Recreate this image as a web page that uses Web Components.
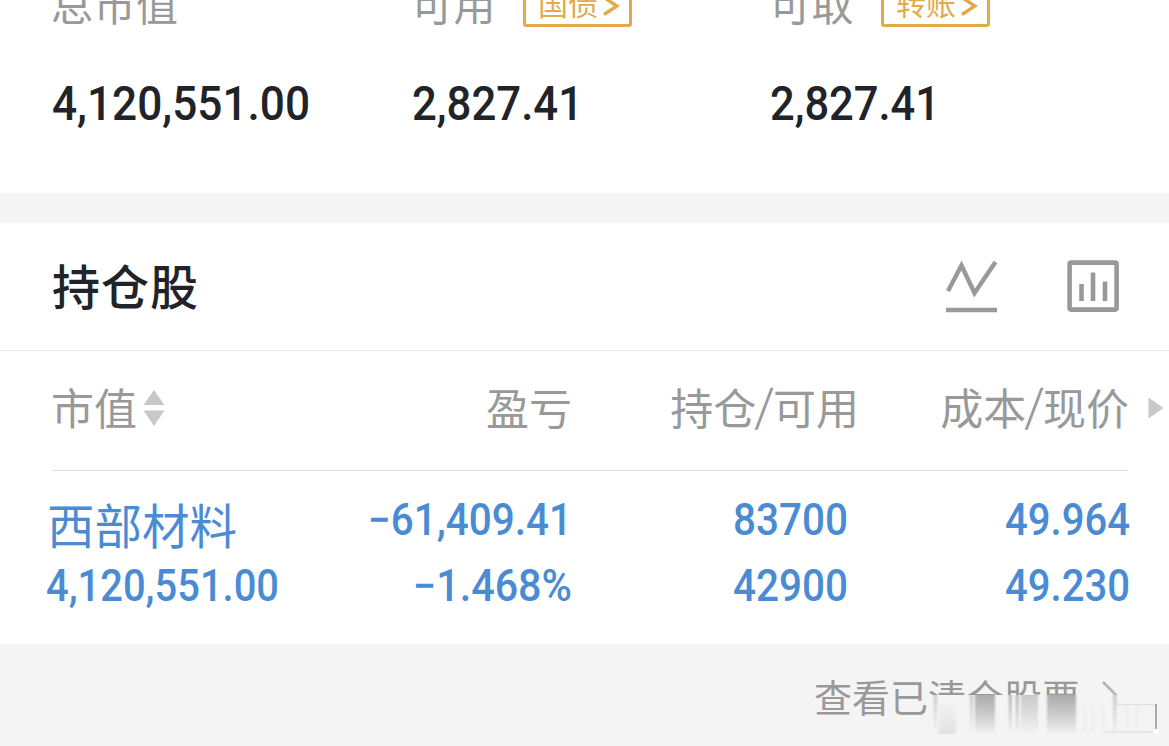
<!DOCTYPE html>
<html lang="zh-CN">
<head>
<meta charset="utf-8">
<title>持仓</title>
<style>
  body {
    margin: 0;
    width: 1169px;
    height: 746px;
    overflow: hidden;
    background: #f4f4f4;
    font-family: "Noto Sans CJK SC", sans-serif;
    color: #212329;
  }
</style>
</head>
<body>
<holdings-page></holdings-page>

<script>
const define = (name, html, setup, observed = []) => {
  const template = document.createElement('template');
  template.innerHTML = html;
  customElements.define(name, class extends HTMLElement {
    static get observedAttributes() {
      return observed;
    }
    constructor() {
      super();
      this.attachShadow({ mode: 'open' }).appendChild(template.content.cloneNode(true));
    }
    connectedCallback() {
      if (setup) setup(this, this.shadowRoot);
    }
    attributeChangedCallback() {
      if (this.isConnected) setup(this, this.shadowRoot);
    }
  });
};

// figure drawn at a fixed width, in narrow digits
define('num-text', `
  <style>
    :host { display: block; line-height: 0; }
    svg { display: block; overflow: visible; }
    text { font-family: Roboto, sans-serif; font-weight: 500; fill: currentColor; }
  </style>
  <svg><text x="0" lengthAdjust="spacingAndGlyphs"></text></svg>
`, (el, root) => {
  const width = el.getAttribute('width') || 0;
  const size = Number(el.getAttribute('size'));
  const svg = root.querySelector('svg');
  const text = root.querySelector('text');
  svg.setAttribute('width', width);
  svg.setAttribute('height', Math.round(size * 0.711));
  text.setAttribute('y', Math.round(size * 0.711));
  text.setAttribute('font-size', size);
  text.setAttribute('textLength', width);
  text.textContent = el.getAttribute('value') || '';
}, ['width', 'value']);

define('link-tag', `
  <style>
    :host {
      display: flex;
      align-items: flex-end;
      gap: 4px;
      box-sizing: border-box;
      width: 109px;
      height: 44px;
      padding: 0 9px 0 12px;
      border: 3px solid #e3a94b;
      border-radius: 3px;
      color: #e3a94b;
      font-size: 30px;
      line-height: 44px;
      white-space: nowrap;
    }
    svg { flex: none; margin-bottom: 8px; }
  </style>
  <slot></slot>
  <svg width="18" height="20" viewBox="0 0 18 20" fill="none" stroke="#e3a94b" stroke-width="3.4"><path d="M2 1.500L15 10L2 18.500"/></svg>
`);

define('balance-item', `
  <style>
    :host { display: block; }
    .label {
      display: flex;
      align-items: flex-end;
      gap: 27px;
      height: 44px;
      margin-top: -17px;
      color: #999;
      font-size: 42px;
      letter-spacing: .5px;
      line-height: 46px;
    }
    .label span { height: 47px; white-space: nowrap; }
    ::slotted(link-tag) { letter-spacing: 0; }
    num-text { margin: 59px 0 0 1px; }
  </style>
  <div class="label"><span></span><slot></slot></div>
  <num-text size="48.5"></num-text>
`, (el, root) => {
  root.querySelector('span').textContent = el.getAttribute('label');
  const num = root.querySelector('num-text');
  num.setAttribute('width', el.getAttribute('width'));
  num.setAttribute('value', el.getAttribute('value'));
});

define('balance-bar', `
  <style>
    :host {
      display: grid;
      grid-template-columns: 360px 358px 1fr;
      box-sizing: border-box;
      height: 193px;
      padding-left: 51px;
      overflow: hidden;
      background: #fff;
    }
  </style>
  <slot></slot>
`);

define('holdings-title', `
  <style>
    :host {
      display: flex;
      align-items: center;
      box-sizing: border-box;
      height: 128px;
      margin-top: 30px;
      padding: 0 50px 2px 52px;
      border-bottom: 1px solid #e8e8e8;
      background: #fff;
    }
    h2 {
      flex: 1;
      margin: 0;
      padding-bottom: 3px;
      font-size: 48px;
      font-weight: 500;
      letter-spacing: 1px;
      line-height: 60px;
    }
    .icons { display: flex; gap: 69px; }
  </style>
  <h2><slot></slot></h2>
  <div class="icons">
    <svg width="53" height="54" viewBox="0 0 53 54" fill="none" stroke="#999" stroke-width="4.4">
      <path d="M3 32L16.5 6.5L29.5 34L50.5 3M1 51H52"/>
    </svg>
    <svg width="52" height="54" viewBox="0 0 52 54" fill="none" stroke="#999">
      <rect x="2.6" y="3.6" width="47" height="47" rx="1.5" stroke-width="4.6"/>
      <path d="M14.5 25V42M26 13.500V42M38 22.500V42" stroke-width="4.6"/>
    </svg>
  </div>
`);

define('holdings-head', `
  <style>
    :host {
      display: grid;
      grid-template-columns: 219px 302px 287px 270px 1fr;
      align-items: center;
      box-sizing: border-box;
      height: 119px;
      padding: 0 0 10px 51px;
      background: #fff;
      color: #999;
      font-size: 43px;
      line-height: 60px;
      white-space: nowrap;
    }
    div { text-align: right; }
    .sort { display: flex; align-items: center; gap: 6px; }
    .sort svg { margin-top: 4px; }
    .more { padding: 5px 0 0 19px; box-sizing: border-box; display: flex; }
    /* the slash stands higher and wider than the CJK font's own */
    i { display: inline-block; font-style: normal; transform: translateY(-3px) skewX(-4deg); }
  </style>
  <div class="sort">市值
    <svg width="22" height="38" viewBox="0 0 22 38" fill="#c8c8c8"><path d="M11 1L21.500 16H.5ZM.5 21.500H21.500L11 37Z"/></svg>
  </div>
  <div>盈亏</div>
  <div>持仓<i>/</i>可用</div>
  <div>成本<i>/</i>现价</div>
  <div class="more"><svg width="16" height="22" viewBox="0 0 16 22" fill="#c8c8c8"><path d="M.5 .5L15.500 11L.5 21.500Z"/></svg></div>
`);

define('holding-row', `
  <style>
    :host {
      display: grid;
      grid-template-columns: 232px 294px 276px 282px;
      grid-template-rows: 1px 1fr;
      box-sizing: border-box;
      height: 174px;
      padding-left: 46px;
      background: #fff;
      color: #4b8bd4;
    }
    .line {
      grid-column: 1 / -1;
      height: 1px;
      margin: 0 0 0 6px;
      width: 1076px;
      background: #ddd;
    }
    .cell { display: flex; flex-direction: column; align-items: flex-end; gap: 35px; padding-top: 33px; }
    .name { align-items: flex-start; padding-top: 23px; gap: 16px; }
    .name span { padding-left: 1px; font-size: 47.500px; line-height: 60px; white-space: nowrap; }
  </style>
  <div class="line"></div>
  <div class="cell name"><span>西部材料</span><num-text size="44" width="233" value="4,120,551.00"></num-text></div>
  <div class="cell"><num-text size="44" width="204" value="−61,409.41"></num-text><num-text size="44" width="159" value="−1.468%"></num-text></div>
  <div class="cell"><num-text size="44" width="115" value="83700"></num-text><num-text size="44" width="115" value="42900"></num-text></div>
  <div class="cell"><num-text size="44" width="125" value="49.964"></num-text><num-text size="44" width="125" value="49.230"></num-text></div>
`);

define('history-link', `
  <style>
    :host {
      display: flex;
      justify-content: flex-end;
      align-items: flex-start;
      position: relative;
      height: 102px;
      padding: 25px 50px 0 0;
      box-sizing: border-box;
      color: #999;
      font-size: 38px;
      line-height: 54px;
      gap: 21px;
      white-space: nowrap;
    }
    .arrow { margin-top: 11px; }
    /* faded streaks lying over the lower half of the link */
    .smear { position: absolute; left: 925px; top: 50px; }
  </style>
  <span>查看已清仓股票</span>
  <svg class="arrow" width="18" height="34" viewBox="0 0 18 34" fill="none" stroke="#b4b4b4" stroke-width="2.500"><path d="M2 2L16 16L2 32"/></svg>
  <svg class="smear" width="244" height="52" viewBox="0 0 244 52">
    <defs>
      <linearGradient id="dark" x1="0" y1="0" x2="0" y2="1"><stop offset="0" stop-color="#ababab"/><stop offset=".5" stop-color="#cbcbcb"/><stop offset="1" stop-color="#f2f2f2"/></linearGradient>
      <linearGradient id="mid" x1="0" y1="0" x2="0" y2="1"><stop offset="0" stop-color="#c8c8c8"/><stop offset="1" stop-color="#f2f2f2"/></linearGradient>
      <linearGradient id="low" x1="0" y1="0" x2="0" y2="1"><stop offset="0" stop-color="#f4f4f4"/><stop offset="1" stop-color="#e2e2e2"/></linearGradient>
      <filter id="soft" x="-10%" y="-10%" width="120%" height="120%"><feGaussianBlur stdDeviation="1.2 .5"/></filter>
    </defs>
    <rect x="5" y="1" width="239" height="51" fill="#f4f4f4"/>
    <g filter="url(#soft)">
      <rect x="9" y="1" width="3" height="38" fill="url(#mid)"/>
      <rect x="14" y="6" width="17" height="34" fill="url(#low)"/>
      <rect x="45" y="1" width="3" height="38" fill="url(#mid)"/>
      <rect x="50" y="1" width="20" height="39" fill="url(#dark)"/>
      <rect x="84" y="1" width="2.500" height="38" fill="url(#dark)"/>
      <rect x="91" y="1" width="2.500" height="38" fill="url(#dark)"/>
      <rect x="96" y="1" width="17" height="38" fill="url(#mid)"/>
      <rect x="122" y="1" width="29" height="39" fill="url(#dark)"/>
      <rect x="188" y="1" width="3.500" height="38" fill="url(#mid)"/>
      <path d="M160 12V38M168 12V38M178 12V38M202 12V38M212 12V38" stroke="#eeeeee" stroke-width="3"/>
    </g>
    <path d="M192 10.500H230" stroke="#e0e0e0" fill="none" stroke-width="1.500"/>
    <path d="M231 10V35" stroke="#aaa" stroke-width="2"/>
    <path d="M180 38H228" stroke="#e6e6e6" stroke-width="2"/>
    <circle cx="231" cy="37.500" r="2.500" fill="#fff"/>
  </svg>
`);

define('holdings-page', `
  <style>
    :host { display: flex; flex-direction: column; width: 1169px; height: 746px; background: #f4f4f4; }
  </style>
  <balance-bar>
    <balance-item label="总市值" value="4,120,551.00" width="258"></balance-item>
    <balance-item label="可用" value="2,827.41" width="171"><link-tag>国债</link-tag></balance-item>
    <balance-item label="可取" value="2,827.41" width="170"><link-tag>转账</link-tag></balance-item>
  </balance-bar>
  <holdings-title>持仓股</holdings-title>
  <holdings-head></holdings-head>
  <holding-row></holding-row>
  <history-link></history-link>
`);
</script>
</body>
</html>
